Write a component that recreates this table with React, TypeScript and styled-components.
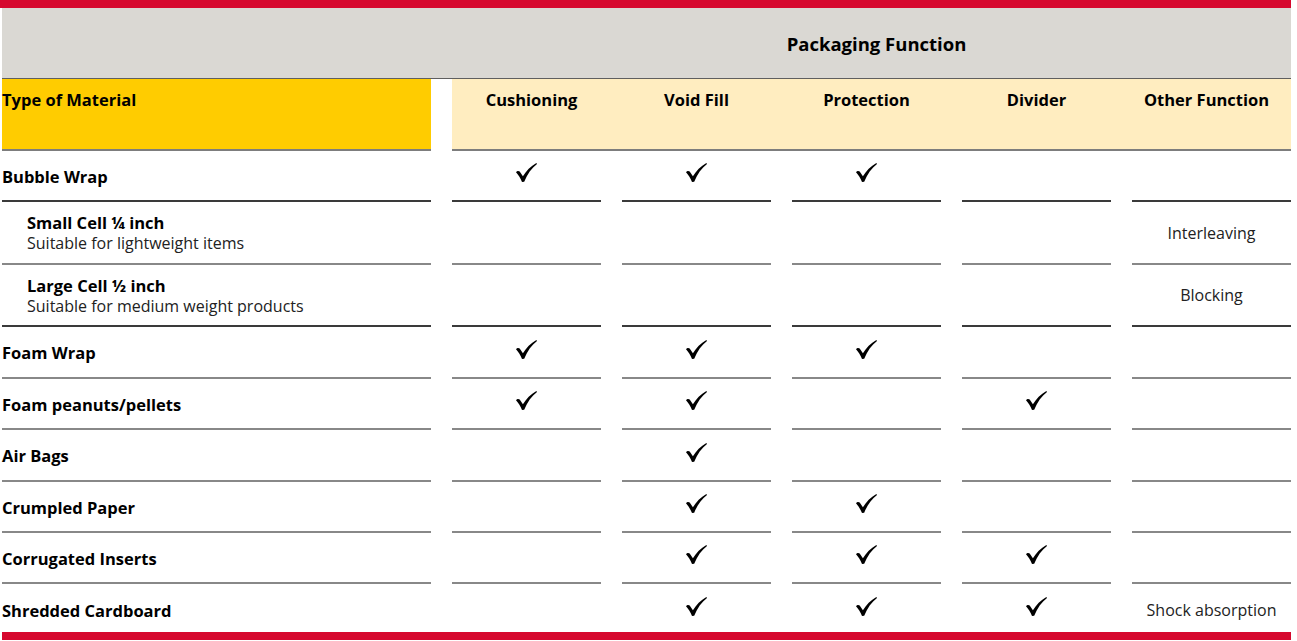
import React from "react";
import styled, { createGlobalStyle } from "styled-components";

const GlobalStyle = createGlobalStyle`
  html, body { margin: 0; padding: 0; background: #ffffff; }
  body { font-family: "Open Sans", "Liberation Sans", sans-serif; color: #000; }
`;

const COLS = "429px repeat(4, 149px) 159px";

const Page = styled.div`
  width: 1297px;
  height: 641px;
  overflow: hidden;
`;

const RedBar = styled.div<{ $left: number }>`
  height: 8px;
  margin-left: ${(p) => p.$left}px;
  width: ${(p) => 1291 - p.$left}px;
  background: #d6082e;
`;

const Table = styled.div`
  margin-left: 2px;
  width: 1289px;
`;

const TitleBand = styled.div`
  display: grid;
  grid-template-columns: ${COLS};
  column-gap: 21px;
  height: 70px;
  background: #dad8d3;
  border-bottom: 1px solid #5f5f5f;
`;

const TitleText = styled.div`
  grid-column: 2 / -1;
  display: flex;
  align-items: center;
  justify-content: center;
  padding-left: 10px;
  padding-top: 1px;
  font-weight: 700;
  font-size: 18.5px;
`;

const Grid = styled.div`
  display: grid;
  grid-template-columns: ${COLS};
  column-gap: 21px;
`;

const MaterialHead = styled.div`
  background: #ffcc00;
  border-bottom: 2px solid #7d7d7d;
  font-weight: 700;
  font-size: 16.5px;
  padding-top: 9px;
  box-sizing: content-box;
  height: 61px;
`;

const FunctionHead = styled.div`
  grid-column: 2 / -1;
  display: grid;
  grid-template-columns: repeat(4, 149px) 159px;
  column-gap: 21px;
  background: #ffedc0;
  border-bottom: 2px solid #7d7d7d;
`;

const FunctionLabel = styled.div<{ $shift?: number }>`
  height: 61px;
  padding-top: 9px;
  text-align: center;
  font-weight: 700;
  font-size: 16.5px;
  transform: translateX(${(p) => p.$shift ?? 0}px);
`;

const Cell = styled.div<{ $h: number; $line: "dark" | "grey" | "none" }>`
  height: ${(p) => p.$h}px;
  box-sizing: border-box;
  padding-top: ${(p) => (p.$line === "none" ? 4 : 1)}px;
  border-bottom: ${(p) =>
    p.$line === "none" ? "none" : `2px solid ${p.$line === "dark" ? "#3a3a3a" : "#888888"}`};
  display: flex;
  flex-direction: column;
  justify-content: center;
`;

const MarkCell = styled(Cell)`
  align-items: center;
`;

const Name = styled.div<{ $indent?: boolean }>`
  font-weight: 700;
  font-size: 16.5px;
  line-height: 21px;
  padding-left: ${(p) => (p.$indent ? 25 : 0)}px;
`;

const Sub = styled.div`
  font-size: 16px;
  line-height: 21px;
  color: #222;
  padding-left: 25px;
`;

const Note = styled.div`
  font-size: 16px;
  line-height: 21px;
  color: #222;
`;

const CheckSvg = styled.svg`
  width: 21px;
  height: 19px;
  margin-bottom: 7px;
`;

const Check = () => (
  <CheckSvg viewBox="0 0 21 19">
    <path
      d="M0 9.3 C0.9 8 2.6 7.6 3.7 8.6 L6.9 13.2 C10.2 8 14.6 3.2 20.4 0 L21 0.9 C15.6 4.9 11.2 11 8.2 18.8 L6 19 C4.5 15.4 2.6 12.2 0 9.3 Z"
      fill="#000"
    />
  </CheckSvg>
);

type Row = {
  name: string;
  sub?: string;
  indent?: boolean;
  marks: boolean[];
  other?: string;
  h: number;
  line: "dark" | "grey" | "none";
};

const rows: Row[] = [
  { name: "Bubble Wrap", marks: [true, true, true, false], h: 51, line: "dark" },
  {
    name: "Small Cell ¼ inch",
    sub: "Suitable for lightweight items",
    indent: true,
    marks: [false, false, false, false],
    other: "Interleaving",
    h: 63,
    line: "grey",
  },
  {
    name: "Large Cell ½ inch",
    sub: "Suitable for medium weight products",
    indent: true,
    marks: [false, false, false, false],
    other: "Blocking",
    h: 62,
    line: "dark",
  },
  { name: "Foam Wrap", marks: [true, true, true, false], h: 52, line: "grey" },
  { name: "Foam peanuts/pellets", marks: [true, true, false, true], h: 51, line: "grey" },
  { name: "Air Bags", marks: [false, true, false, false], h: 52, line: "grey" },
  { name: "Crumpled Paper", marks: [false, true, true, false], h: 51, line: "grey" },
  { name: "Corrugated Inserts", marks: [false, true, true, true], h: 51, line: "grey" },
  {
    name: "Shredded Cardboard",
    marks: [false, true, true, true],
    other: "Shock absorption",
    h: 48,
    line: "none",
  },
];

const headers: { label: string; shift: number }[] = [
  { label: "Cushioning", shift: 5 },
  { label: "Void Fill", shift: 0 },
  { label: "Protection", shift: 0 },
  { label: "Divider", shift: 0 },
  { label: "Other Function", shift: -5 },
];

export default function App() {
  return (
    <Page>
      <GlobalStyle />
      <RedBar $left={0} />
      <Table>
        <TitleBand>
          <TitleText>Packaging Function</TitleText>
        </TitleBand>
        <Grid>
          <MaterialHead>Type of Material</MaterialHead>
          <FunctionHead>
            {headers.map((h) => (
              <FunctionLabel key={h.label} $shift={h.shift}>
                {h.label}
              </FunctionLabel>
            ))}
          </FunctionHead>
          {rows.map((r) => (
            <React.Fragment key={r.name}>
              <Cell $h={r.h} $line={r.line}>
                <Name $indent={r.indent}>{r.name}</Name>
                {r.sub && <Sub>{r.sub}</Sub>}
              </Cell>
              {r.marks.map((m, i) => (
                <MarkCell key={i} $h={r.h} $line={r.line}>
                  {m && <Check />}
                </MarkCell>
              ))}
              <MarkCell $h={r.h} $line={r.line}>
                {r.other && <Note>{r.other}</Note>}
              </MarkCell>
            </React.Fragment>
          ))}
        </Grid>
      </Table>
      <RedBar $left={2} />
    </Page>
  );
}
